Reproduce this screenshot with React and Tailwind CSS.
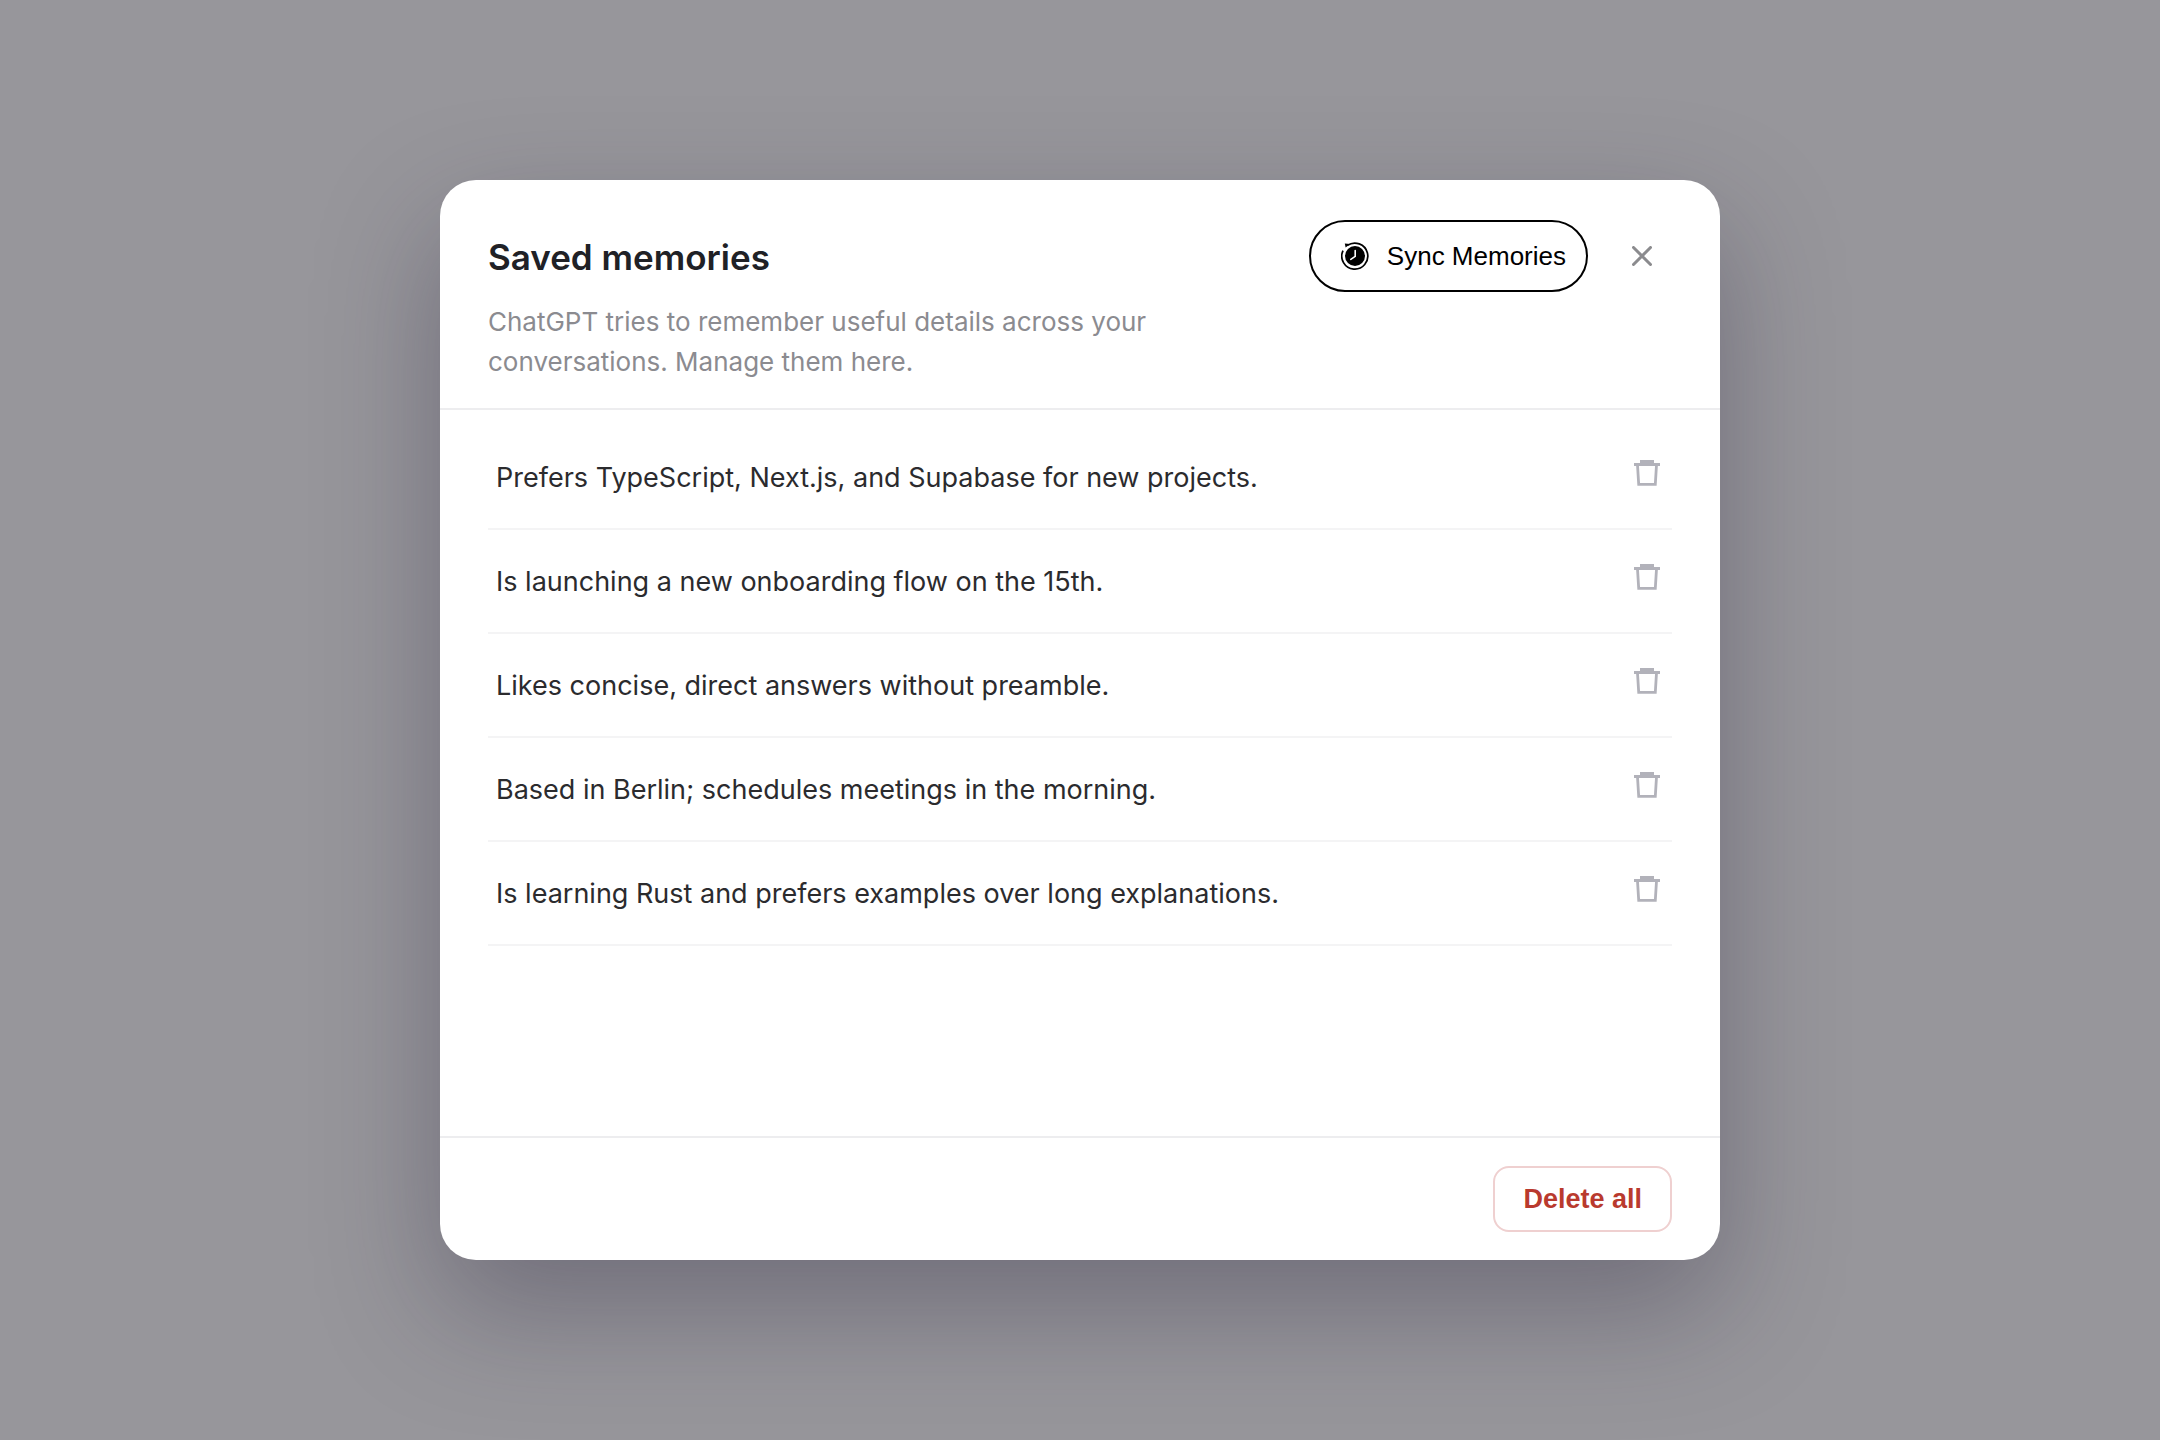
const memories = [
  "Prefers TypeScript, Next.js, and Supabase for new projects.",
  "Is launching a new onboarding flow on the 15th.",
  "Likes concise, direct answers without preamble.",
  "Based in Berlin; schedules meetings in the morning.",
  "Is learning Rust and prefers examples over long explanations.",
];

function HistoryIcon() {
  return (
    <svg className="size-7" viewBox="0 0 28 28" fill="none" aria-hidden="true">
      <circle cx="14" cy="14" r="10" fill="#000" />
      <path d="M14.2 8.6v5.8l-4.4 2.9" stroke="#fff" strokeWidth="1.6" strokeLinecap="round" strokeLinejoin="round" />
      <path d="M2 8.6A13 13 0 1 0 6.4 3.4" stroke="#000" strokeWidth="1.7" />
      <path d="M3.8 1.6 9.2 2 4.6 5.6Z" fill="#000" />
    </svg>
  );
}

function CloseIcon() {
  return (
    <svg className="size-5" viewBox="0 0 20 20" fill="none" aria-hidden="true">
      <path d="M1.5 1.5l17 17M18.5 1.5l-17 17" stroke="currentColor" strokeWidth="3" strokeLinecap="round" />
    </svg>
  );
}

function TrashIcon() {
  return (
    <svg className="size-[26px]" viewBox="0 0 26 26" fill="none" aria-hidden="true">
      <path d="M6 0h14v3h6v3H0V3h6z" fill="currentColor" />
      <path d="M3.5 5l1.2 19.3h16.6L22.5 5" stroke="currentColor" strokeWidth="2.8" />
    </svg>
  );
}

export default function App() {
  return (
    <div className="flex min-h-screen items-center justify-center bg-[#97969b] p-8 font-['Inter',sans-serif]">
      <section
        role="dialog"
        aria-labelledby="memories-title"
        className="flex min-h-[1080px] w-full max-w-[1280px] flex-col rounded-[36px] bg-white shadow-[0_48px_120px_rgba(40,35,60,0.35)]"
      >
        <header className="flex items-start justify-between border-b-2 border-[#ededef] px-12 pt-10 pb-[26px]">
          <div className="max-w-[680px] pt-3">
            <h1 id="memories-title" className="text-[35px] leading-[50px] font-semibold text-[#202126]">
              Saved memories
            </h1>
            <p className="mt-5 text-[26px] leading-10 text-[#8b8b90]">
              ChatGPT tries to remember useful details across your conversations. Manage them here.
            </p>
          </div>
          <div className="flex items-center gap-6">
            <button className="flex h-[72px] items-center gap-[18px] rounded-full border-2 border-black pr-5 pl-[30px] font-['Liberation_Sans',sans-serif] text-[26px] text-black">
              <HistoryIcon />
              Sync Memories
            </button>
            <button aria-label="Close" className="flex size-[60px] items-center justify-center text-[#8b8b8e]">
              <CloseIcon />
            </button>
          </div>
        </header>

        <ul className="flex-1 px-12 pt-4">
          {memories.map((memory) => (
            <li key={memory} className="flex items-start justify-between border-b-2 border-[#f4f4f5] px-2 pt-[30px] pb-7">
              <span className="text-[27px] leading-[44px] text-[#2b2b2e]">{memory}</span>
              <button aria-label={`Delete: ${memory}`} className="p-1 text-[#b2b2ba]">
                <TrashIcon />
              </button>
            </li>
          ))}
        </ul>

        <footer className="flex justify-end border-t-2 border-[#ededef] px-12 py-7">
          <button className="h-[66px] rounded-2xl border-2 border-[#efd0d0] px-7 font-['Liberation_Sans',sans-serif] text-[27px] font-bold text-[#b93a2e]">
            Delete all
          </button>
        </footer>
      </section>
    </div>
  );
}
